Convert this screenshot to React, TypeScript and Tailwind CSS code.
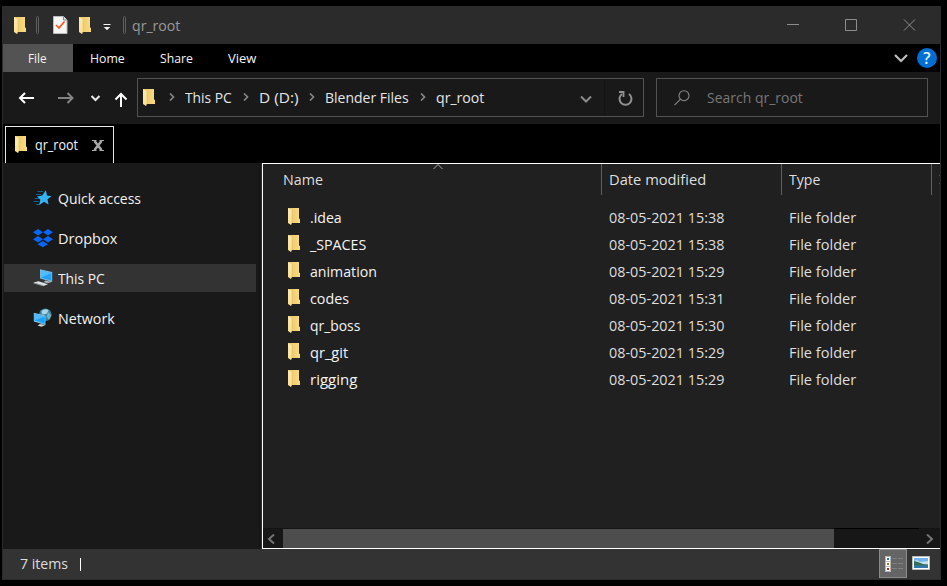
import { useLayoutEffect, useRef, useState } from "react";

/* A single-line label condensed to the given width. */
function Label({ children, width, className = "" }: { children: string; width: number; className?: string }) {
  const ref = useRef<HTMLSpanElement>(null);
  const [scale, setScale] = useState(1);
  useLayoutEffect(() => {
    const measure = () => {
      if (ref.current) setScale(width / ref.current.offsetWidth);
    };
    measure();
    document.fonts.ready.then(measure);
  }, [width]);
  return (
    <span className={`block shrink-0 whitespace-nowrap ${className}`} style={{ width }}>
      <span ref={ref} className="inline-block origin-left" style={{ transform: `scaleX(${scale})` }}>
        {children}
      </span>
    </span>
  );
}

function Folder({ className = "" }: { className?: string }) {
  return (
    <svg width="12" height="17" viewBox="0 0 12 17" className={`shrink-0 ${className}`}>
      <defs>
        <linearGradient id="back" x1="0" x2="1" y1="0" y2="0">
          <stop offset="0" stopColor="#e9c568" />
          <stop offset="1" stopColor="#fbdc80" />
        </linearGradient>
        <linearGradient id="flap" x1="0" x2="0" y1="0" y2="1">
          <stop offset="0" stopColor="#ffe9ae" />
          <stop offset="1" stopColor="#fbdf92" />
        </linearGradient>
      </defs>
      <path d="M0 0H11V10.5L12 11V15H0Z" fill="url(#back)" />
      <path d="M0 0L4 2.2V14.5L3 17L0 15Z" fill="url(#flap)" />
      <path d="M4 2.2V14.5L3.2 16.5" fill="none" stroke="#d8b65e" strokeWidth=".5" />
    </svg>
  );
}

function Crumb({ className = "" }: { className?: string }) {
  return (
    <svg width="6" height="8" viewBox="0 0 6 8" className={`mr-[10px] shrink-0 ${className}`} fill="none" stroke="#858585" strokeWidth="1.7">
      <path d="M1 .5L4.5 4L1 7.5" />
    </svg>
  );
}

const StarIcon = () => (
  <svg width="20" height="20" viewBox="0 0 20 20">
    <path d="M12.8 2.2L14 7.6L18.5 8.2L14.5 11.3L15.5 16.6L11 13.7L6 17.2L7.4 11.7L4 8.5L9.2 7.6Z" fill="#35b4f5" />
    <path d="M4.500 3.500H10M3 6.500H8M1.500 10.500H6M.5 13.500H5.500M3 16.500H6" stroke="#176a98" strokeWidth=".9" />
  </svg>
);

const DropboxIcon = () => (
  <svg width="20" height="20" viewBox="0 0 20 20" fill="#0867f8">
    <path d="M5 1L10 4.2L5 7.4L0 4.2ZM15 1L20 4.2L15 7.4L10 4.2ZM0 11.2L5 7.9L10 11.2L5 14.4ZM15 7.9L20 11.2L15 14.4L10 11.2ZM4.500 16.2L9.700 12.9L15 16.2L9.700 19.3Z" />
  </svg>
);

const PcIcon = () => (
  <svg width="20" height="20" viewBox="0 0 20 20">
    <path d="M7 1.2L19.2 4V14L7 10.5Z" fill="#79b9dc" />
    <path d="M8 2.5L18.3 4.9V12.6L8 9.7Z" fill="#1ca5fb" />
    <path d="M8 2.5L18.3 4.9L8 9.7Z" fill="#53bcff" />
    <path d="M12.5 12.5L16 13.3L18 13V14.2L14.5 15.2L10.5 14Z" fill="#a8b4b9" />
    <path d="M.5 14.6L5.5 13.2L15 16.2L10.5 18Z" fill="#dce2e5" />
    <path d="M.5 14.6L10.5 17.2V18.2L.5 15.4Z" fill="#939b9f" />
  </svg>
);

const NetworkIcon = () => (
  <svg width="20" height="20" viewBox="0 0 20 20">
    <circle cx="12.3" cy="6.8" r="6.3" fill="#397f9e" />
    <path d="M8.5 3Q12 0 15.7 2.4L13.5 6L9 6.5Z" fill="#a9d7e6" />
    <path d="M15 4L18.3 7L16 11.8L13.5 9Z" fill="#72aec5" />
    <path d="M.8 4.8L12.5 7.6V17L.8 13.4Z" fill="#80c0e0" />
    <path d="M1.6 6L11.7 8.4V15.6L1.6 12.6Z" fill="#18a3fb" />
    <path d="M1.6 6L11.7 8.4L1.6 12.6Z" fill="#52b9fb" />
    <path d="M7 16L12.5 17L8.5 18.8L4.5 17.5Z" fill="#ccd6da" />
  </svg>
);

const places = [
  { name: "Quick access", width: 83, icon: <StarIcon /> },
  { name: "Dropbox", width: 59, icon: <DropboxIcon /> },
  { name: "This PC", width: 47, icon: <PcIcon />, active: true },
  { name: "Network", width: 57, icon: <NetworkIcon /> },
];

const files = [
  { name: ".idea", width: 32, date: "08-05-2021 15:38" },
  { name: "_SPACES", width: 56, date: "08-05-2021 15:38" },
  { name: "animation", width: 67, date: "08-05-2021 15:29" },
  { name: "codes", width: 39, date: "08-05-2021 15:31" },
  { name: "qr_boss", width: 50, date: "08-05-2021 15:30" },
  { name: "qr_git", width: 38, date: "08-05-2021 15:29" },
  { name: "rigging", width: 47, date: "08-05-2021 15:29" },
];

function TitleBar() {
  return (
    <header className="flex h-[38px] shrink-0 items-center bg-[#2b2b2b] pl-[11px]">
      <Folder />
      <i className="ml-[10px] h-[18px] w-[3px] rounded-sm border border-[#606060]" />
      <svg width="15" height="18" viewBox="0 0 15 18" className="ml-[14px]">
        <path d="M.5 .5H10.5L14 4V17.5H.5Z" fill="#f5f5f5" stroke="#bcbcbc" />
        <path d="M10.5 .5V4H14" fill="#ddd" stroke="#888" />
        <path d="M3 9L6 12L11.5 5.5" fill="none" stroke="#f1591d" strokeWidth="1.7" />
      </svg>
      <Folder className="ml-[11px]" />
      <svg width="8" height="8" viewBox="0 0 8 8" className="ml-3 mt-[3px]" fill="#f2f2f2">
        <path d="M.5 1H7.5V2H.5ZM.8 4H7.2L4 7.2Z" />
      </svg>
      <i className="ml-3 h-[18px] w-[3px] rounded-sm border border-[#606060]" />
      <Label width={48} className="ml-[6px] text-[#999999]">qr_root</Label>
      <svg width="132" height="14" viewBox="0 0 132 14" className="ml-auto mr-[23px] mb-px" fill="none" stroke="#8d8d8d">
        <path d="M2 6.500H14M60.500 1.500H71.500V12.500H60.500ZM119 1.500L130 12.500M130 1.500L119 12.500" />
      </svg>
    </header>
  );
}

function Ribbon() {
  return (
    <nav className="flex h-7 shrink-0 items-center bg-black text-[13px] text-[#f4f4f4]">
      <div className="flex h-full w-[70px] items-center bg-[#535353] pl-[25px]">
        <Label width={19}>File</Label>
      </div>
      <Label width={35} className="ml-[17px]">Home</Label>
      <Label width={33} className="ml-[35px]">Share</Label>
      <Label width={28} className="ml-[35px]">View</Label>
      <svg width="14" height="10" viewBox="0 0 14 10" className="ml-auto mr-[9px]" fill="none" stroke="#bdbdbd" strokeWidth="2.2">
        <path d="M1 2L7 8L13 2" />
      </svg>
      <div className="mr-[3px] flex size-5 items-center justify-center rounded-full bg-[#006fd3] text-[16px] leading-none font-semibold text-[#e3f1ff]">?</div>
    </nav>
  );
}

function AddressBar() {
  return (
    <div className="flex h-[52px] shrink-0 items-start bg-[#191919] pt-[6px]">
      <svg width="118" height="18" viewBox="0 0 118 18" className="ml-[13px] mt-[11px] shrink-0" fill="none" strokeWidth="2">
        <path d="M18 9H4M9 4L4 9L9 14" stroke="#fff" />
        <path d="M42 9H56M51.500 4L56.500 9L51.500 14" stroke="#848484" />
        <path d="M75.500 7L79.500 11L83.500 7" stroke="#e8e8e8" />
        <path d="M105 18V5M99.500 10.500L105 5L110.500 10.500" stroke="#fff" />
      </svg>
      <div className="ml-[3px] flex h-[39px] w-[507px] shrink-0 items-center border border-[#535353] pl-[5px] text-[#e6e6e6]">
        <Folder />
        <div className="mb-px ml-[14px] flex items-center">
          <Crumb />
          <Label width={47}>This PC</Label>
          <Crumb className="ml-[11px]" />
          <Label width={39}>D (D:)</Label>
          <Crumb className="ml-[11px]" />
          <Label width={84}>Blender Files</Label>
          <Crumb className="ml-[11px]" />
          <Label width={48}>qr_root</Label>
        </div>
        <svg width="12" height="8" viewBox="0 0 12 8" className="ml-auto mt-[3px]" fill="none" stroke="#8b8b8b" strokeWidth="2">
          <path d="M1 1.500L6 6.500L11 1.500" />
        </svg>
        <div className="ml-3 flex h-full w-[39px] items-center border-l border-[#141414] pl-[13px]">
          <svg width="15" height="16" viewBox="0 0 15 16" fill="none" stroke="#919191" strokeWidth="2">
            <path d="M4 4A6 6 0 1 0 11 4" />
            <path d="M1 2H5.500V7" strokeWidth="1.800" />
          </svg>
        </div>
      </div>
      <div className="ml-3 flex h-[39px] w-[272px] shrink-0 items-center border border-[#535353] pl-[17px] text-[#777777]">
        <svg width="16" height="16" viewBox="0 0 16 16" fill="none" stroke="#888" strokeWidth="1.1">
          <circle cx="10" cy="5.700" r="5" />
          <path d="M6.500 9.200L.5 15.200" />
        </svg>
        <Label width={96} className="mb-px ml-[17px]">Search qr_root</Label>
      </div>
    </div>
  );
}

function TabStrip() {
  return (
    <div className="flex h-[39px] shrink-0 items-end bg-black">
      <div className="ml-[2px] flex h-[37px] w-[109px] items-center border border-b-0 border-[#e5e5e5] pl-[9px] text-[14px] text-[#f3f3f3]">
        <Folder className="mb-px" />
        <Label width={43} className="ml-2">qr_root</Label>
        <svg width="12" height="11" viewBox="0 0 12 11" className="ml-[14px]" fill="none" stroke="#a9a9a9">
          <path d="M2.500 1L9.500 10M9.500 1L2.500 10" strokeWidth="2.600" />
          <path d="M0 .5H4.500M7.500 .5H12M0 10.500H4.500M7.500 10.500H12" />
        </svg>
      </div>
    </div>
  );
}

function Sidebar() {
  return (
    <aside className="flex w-[257px] shrink-0 flex-col gap-3 border-r border-[#141414] pt-[21px] text-[#f2f2f2]">
      {places.map((place) => (
        <div
          key={place.name}
          className={`ml-px mr-[3px] flex h-7 items-center pl-[29px] ${place.active ? "bg-[#333333]" : ""}`}
        >
          {place.icon}
          <Label width={place.width} className="ml-[5px]">{place.name}</Label>
        </div>
      ))}
    </aside>
  );
}

function FileList() {
  return (
    <main className="flex min-w-0 flex-1 flex-col border border-r-0 border-white bg-[#202020]">
      <div className="relative flex h-[31px] shrink-0 items-center text-[#dedede]">
        <svg width="10" height="6" viewBox="0 0 10 6" className="absolute left-[170px] top-0" fill="none" stroke="#aaa">
          <path d="M.5 5L5 .5L9.500 5" />
        </svg>
        <div className="flex h-full w-[338px] items-center pb-px pl-5"><Label width={40}>Name</Label></div>
        <div className="flex h-full w-[180px] items-center border-l border-[#606060] pb-px pl-[7px]"><Label width={97}>Date modified</Label></div>
        <div className="flex h-full w-[150px] items-center border-l border-[#606060] pb-px pl-[7px]"><Label width={31}>Type</Label></div>
        <div className="flex h-full flex-1 items-center justify-end border-l border-[#606060]">
          <svg width="1" height="9" viewBox="0 0 1 9"><path d="M0 0H1V1H0ZM0 8H1V9H0Z" fill="#28508c" /></svg>
        </div>
      </div>
      <div className="flex-1 pt-2">
        {files.map((file) => (
          <div key={file.name} className="flex h-[27px] items-center">
            <div className="flex w-[346px] items-center pl-[25px] text-[#f4f4f4]">
              <Folder className="-mt-px" />
              <Label width={file.width} className="ml-[10px]">{file.name}</Label>
            </div>
            <Label width={115} className="text-[#dedede]">{file.date}</Label>
            <Label width={67} className="ml-[65px] text-[#dedede]">File folder</Label>
          </div>
        ))}
      </div>
      <div className="flex h-5 shrink-0 items-center border-t border-[#141414] bg-[#171717]">
        <svg width="8" height="10" viewBox="0 0 8 10" className="ml-1" fill="none" stroke="#747474" strokeWidth="2"><path d="M7 .5L2 5L7 9.500" /></svg>
        <div className="ml-2 h-full w-[551px] bg-[#4d4d4d]" />
        <div className="-mt-px h-px w-[85px] self-start bg-black" />
        <svg width="8" height="10" viewBox="0 0 8 10" className="ml-auto mr-[6px]" fill="none" stroke="#747474" strokeWidth="2"><path d="M1 .5L6 5L1 9.500" /></svg>
      </div>
    </main>
  );
}

function StatusBar() {
  return (
    <footer className="flex h-[30px] shrink-0 items-center bg-[#333333] pl-[17px] text-[#dedede]">
      <Label width={48} className="mb-[2px]">7 items</Label>
      <i className="ml-3 h-[13px] w-px bg-white" />
      <div className="ml-auto flex h-[29px] w-7 items-center self-start border border-[#8a8a8a] bg-[#656565] pl-[5px]">
        <svg width="19" height="16" viewBox="0 0 19 16">
          <path d="M0 0H6V16H0Z" fill="#b8b8b8" />
          <path d="M1 1H5V5H1ZM1 6H5V10H1ZM1 11H5V15H1Z" fill="#fff" />
          <path d="M2 2H4V4H2Z" fill="#2b75ac" /><path d="M2 7H4V9H2Z" fill="#897f25" /><path d="M2 12H4V14H2Z" fill="#b32e1d" />
          <path d="M7 2.500H12M13 2.500H18M7 7.500H12M13 7.500H18M7 12.500H12M13 12.500H18" stroke="#808080" />
        </svg>
      </div>
      <svg width="18" height="14" viewBox="0 0 18 14" className="ml-[5px] mr-[10px] mb-[2px]">
        <path d="M.5 .5H17.500V13.500H.5Z" fill="#fff" stroke="#bcbcbc" />
        <path d="M2 2H16V12H2Z" fill="#72b4ef" />
        <path d="M2 5L5 4L8 6L16 5V9H2Z" fill="#c4e1ee" />
        <path d="M2 5L6 6L11 8L16 8.500V10H2Z" fill="#356e58" />
        <path d="M2 9.500H16V12H2Z" fill="#3178ae" />
      </svg>
    </footer>
  );
}

export default function App() {
  return (
    <div className="h-[586px] w-[947px] overflow-hidden bg-black pl-[2px] pt-[6px] font-['Open_Sans',sans-serif] text-[15px] leading-5">
      <div className="flex h-[574px] w-[939px] flex-col border border-t-0 border-[#2b2b2b]">
        <TitleBar />
        <Ribbon />
        <AddressBar />
        <TabStrip />
        <div className="flex min-h-0 flex-1 bg-[#191919]">
          <Sidebar />
          <div className="w-[2px] shrink-0 border-r border-[#2b2b2b]" />
          <FileList />
        </div>
        <StatusBar />
      </div>
    </div>
  );
}
